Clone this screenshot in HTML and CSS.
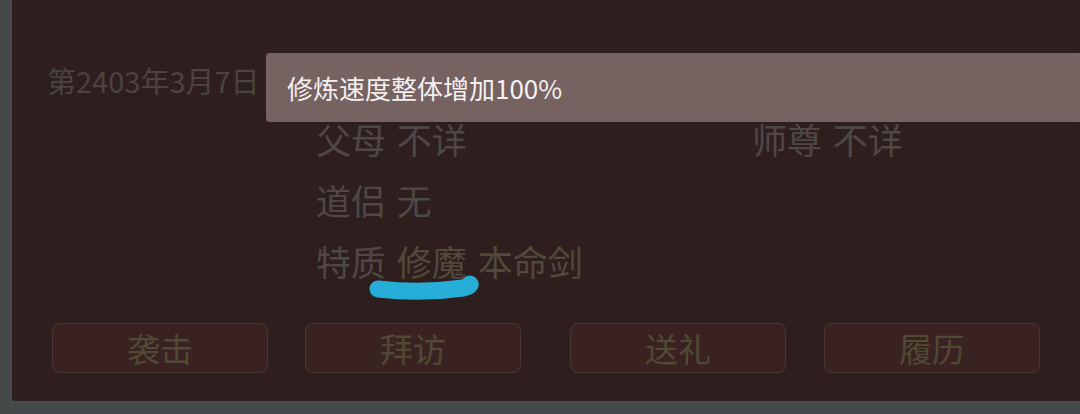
FILE: index.html
```html
<!DOCTYPE html>
<html lang="zh">
<head>
<meta charset="utf-8">
<link rel="stylesheet" href="styles.css">
</head>
<body>
<div class="panel">
  <div class="date">第2403年3月7日</div>
  <div class="info">
    <div class="row"><span class="label">父母</span> <span class="value">不详</span></div>
    <div class="row"><span class="label">师尊</span> <span class="value">不详</span></div>
    <div class="row"><span class="label">道侣</span> <span class="value">无</span></div>
    <div class="row"></div>
    <div class="row traits"><span class="label">特质</span> <span class="trait">修魔</span> <span class="trait">本命剑</span></div>
  </div>
  <div class="actions">
    <button class="btn">袭击</button>
    <button class="btn">拜访</button>
    <button class="btn">送礼</button>
    <button class="btn">履历</button>
  </div>
  <div class="tooltip">修炼速度整体增加100%</div>
  <svg class="mark" width="130" height="36" viewBox="0 0 130 36">
    <path d="M17 20 Q 60 25 102 19 Q 110 17 109 15" fill="none" stroke="#27aed8" stroke-width="17" stroke-linecap="round" stroke-linejoin="round"/>
  </svg>
</div>
</body>
</html>
```

FILE: styles.css
```css
html, body {
  margin: 0;
  padding: 0;
}
body {
  width: 1080px;
  height: 414px;
  background: #46494a;
  font-family: "Noto Sans CJK SC", "Noto Sans", sans-serif;
  overflow: hidden;
}
.panel {
  position: relative;
  margin-left: 12px;
  width: 1068px;
  height: 401px;
  box-sizing: border-box;
  background: #2e1f1e;
  border-right: 6px solid #2b1e1c;
  border-bottom-left-radius: 3px;
  padding: 60px 0 0 0;
}
.date {
  margin-left: 35px;
  font-size: 29px;
  line-height: 40px;
  height: 40px;
  color: #4b4341;
  white-space: nowrap;
}
.info {
  margin-top: 8px;
  margin-left: 304px;
  display: grid;
  grid-template-columns: 436px auto;
}
.row {
  font-size: 35px;
  line-height: 61px;
  height: 61px;
  color: #4f4745;
  white-space: nowrap;
  word-spacing: 3px;
}
.traits {
  grid-column: 1 / span 2;
}
.trait {
  color: #51493a;
}
.actions {
  margin: 32px 0 0 40px;
  display: flex;
}
.btn {
  width: 216px;
  height: 50px;
  box-sizing: border-box;
  background: #3a2221;
  border: 1.5px solid #4a3836;
  border-radius: 8px;
  color: #4f4935;
  font-family: "Noto Sans CJK SC", "Noto Sans", sans-serif;
  font-size: 33px;
  line-height: 46px;
  padding: 0;
}
.btn:nth-child(2) {
  margin-left: 37px;
}
.btn:nth-child(3) {
  margin-left: 49px;
}
.btn:nth-child(4) {
  margin-left: 38px;
}
.tooltip {
  position: absolute;
  left: 254px;
  top: 53px;
  width: 840px;
  height: 69px;
  box-sizing: border-box;
  padding-left: 21px;
  background: #756261;
  border-radius: 4px;
  color: #f5f0f0;
  font-size: 26px;
  line-height: 69px;
  white-space: nowrap;
}
.mark {
  position: absolute;
  left: 349px;
  top: 269px;
}
```
